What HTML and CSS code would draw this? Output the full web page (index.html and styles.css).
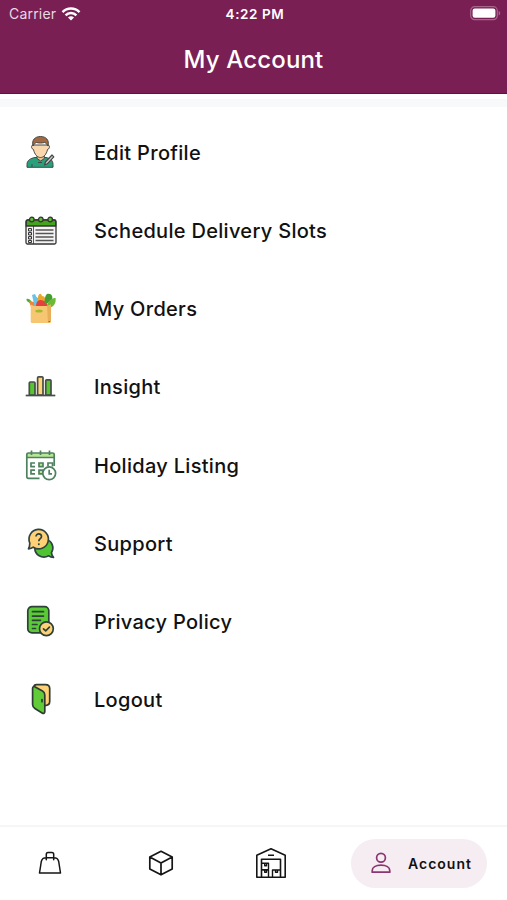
FILE: index.html
```html
<!DOCTYPE html>
<html lang="en">
<head>
    <meta charset="UTF-8">
    <meta name="viewport" content="width=device-width, initial-scale=1.0">
    <title>My Account</title>
    <link rel="stylesheet" href="styles.css">
</head>
<body>
    <header class="header">
        <div class="status-bar">
            <div class="carrier">
                <span>Carrier</span>
                <svg width="20" height="16" viewBox="0 0 20 16" fill="none" stroke="#fff" stroke-width="2.5">
                    <path d="M1.5 6.1a12 12 0 0 1 17 0M4.6 9.3a7.6 7.6 0 0 1 10.8 0"/>
                    <path d="M10 14.6 7 11.6a4.3 4.3 0 0 1 6 0z" fill="#fff" stroke="none"/>
                </svg>
            </div>
            <span class="time">4:22 PM</span>
            <div class="battery">
                <svg width="31" height="15" viewBox="0 0 31 15">
                    <rect x=".7" y=".7" width="26.6" height="13" rx="4" fill="none" stroke="#a5668a" stroke-width="1.2"/>
                    <rect x="2.6" y="2.6" width="22.8" height="9.2" rx="2.2" fill="#fff"/>
                    <path d="M28.7 5v4.4c2-.7 2-3.7 0-4.4z" fill="#a5668a"/>
                </svg>
            </div>
        </div>
        <h1 class="title">My Account</h1>
    </header>

    <main class="menu">
        <a class="menu-item">
            <svg class="icon" viewBox="0 0 36 36" stroke="#454747" stroke-width="1" stroke-linejoin="round">
                <path d="M5 32.300v-3c0-4 3.500-6 8-6.800h11c4 .8 7 2.800 7 6.800v3z" fill="#26a17b"/>
                <path d="M15 20v3.500l3.700 2.500 3.600-2.500V20z" fill="#efc096"/>
                <path d="M11 10c-2 0-2 4 .5 4.500 1 5 4 8 7 8s6-3 7-8c2.500-.5 2.500-4.500.5-4.500z" fill="#fbd7ae"/>
                <path d="M11 11C9.500 5 13 1.500 18.500 1.500S27.500 5 26 11c-1-2-2-3-3.500-3.500-3 .7-5.500.7-8 0C13 8 12 9 11 11z" fill="#a26a42"/>
                <path d="m22.500 30 1-3 6.500-7 1.800 1.800-6.500 7z" fill="#ccc" stroke-width="1.200"/>
                <path d="M10 29v3M16 27.500h4" fill="none"/>
            </svg>
            <span>Edit Profile</span>
        </a>
        <a class="menu-item">
            <svg class="icon" viewBox="0 0 36 36" stroke="#353535" stroke-width="1.300">
                <rect x="4" y="7" width="30" height="24" rx="1.500" fill="#f4f4f4"/>
                <path d="M4.300 13V8.500Q4.300 7 6 7h26q1.700 0 1.700 1.500V13z" fill="#43a51d"/>
                <path d="M11.500 13v18" stroke-width=".8"/>
                <path d="M13.500 17H31.500M13.500 20.500H31.500M13.500 24H31.500M13.500 27.500H31.500" stroke="#555" stroke-width="1.500"/>
                <path d="M6.500 15.500h3v2.500h-3zM6.500 19.500h3V22h-3zM6.500 23.500h3V26h-3zM6.500 27.500h3v2h-3z" fill="#ddd" stroke-width="1"/>
                <g fill="#5bbd31"><circle cx="9.800" cy="6.500" r="2.300"/><circle cx="18.800" cy="6.500" r="2.300"/><circle cx="28.200" cy="6.500" r="2.300"/></g>
            </svg>
            <span>Schedule Delivery Slots</span>
        </a>
        <a class="menu-item">
            <svg class="icon" viewBox="0 0 36 36">
                <path d="M4.500 8c3-1 5 2 7 6H9C8 11 4 11 4.500 8z" fill="#56a83c"/>
                <path d="m7 10 5 1 3 5H9z" fill="#f38432"/>
                <path d="m10 4 3-1 1.500 3 3 2v7h-5z" fill="#67c4e8"/>
                <path d="M16 6c1-4 3-4 4-1 3 0 4 3 3 6l-7 2z" fill="#e6a72d"/>
                <path d="M14 15c0-8 9-8 12 0z" fill="#e73d3f"/>
                <path d="M23 14c-1-5 0-9 2-11 5-1 6 3 5 6z" fill="#459d32"/>
                <path d="M25 14c2-5 5-7 8.500-7 1 5-2 9-6.500 10z" fill="#6dbb35"/>
                <path d="M8.700 13.500 12 15h13l4-1.500v17q0 1.500-1.500 1.500H10q-1.300 0-1.300-1.500z" fill="#f6c673"/>
                <path d="m25 15 4-1.500V31l-3 1z" fill="#e9ae58"/>
                <ellipse cx="17" cy="20" rx="3.700" ry="1.500" fill="#a5b92f"/>
                <path d="M26.500 30.500h1.500" stroke="#9a6a2e"/>
            </svg>
            <span>My Orders</span>
        </a>
        <a class="menu-item">
            <svg class="icon" viewBox="0 0 36 36" stroke="#474d49" stroke-width="1.700">
                <path d="M7.300 26V14q0-1 1-1H12q1 0 1 1v12zM23.700 26V11.800q0-1 1-1H28q1 0 1 1V26z" fill="#55c62d"/>
                <path d="M15.600 26V8.800q0-1 1-1H20q1 0 1 1V26z" fill="#ffd576"/>
                <path d="M3.700 26.500h29.600" stroke-width="1.700"/>
            </svg>
            <span>Insight</span>
        </a>
        <a class="menu-item">
            <svg class="icon" viewBox="0 0 36 36" fill="none" stroke="#4e8160" stroke-width="1.700">
                <path d="M4.500 5h28v4.500h-28z" fill="#b8e794" stroke="none"/>
                <path d="M17.500 30.300H6.500q-1.700 0-1.700-1.700V6.500Q4.800 5 6.500 5h24q1.700 0 1.700 1.500V18M4.800 9.500h27.400M9.500 2.500V7M18.500 2.500V7M27.500 2.500V7"/>
                <path d="M13 15h-4v3.700h4M13 22.200h-4v3.700h4M26 18.500V15h4.500v3.500"/>
                <path d="M17 15h4v3.700h-4zM17 22.200h4v3.700h-4z" fill="#b8e794"/>
                <circle cx="27.200" cy="25.300" r="6.400" fill="#fff"/>
                <path d="M27.200 21.800v4H30"/>
            </svg>
            <span>Holiday Listing</span>
        </a>
        <a class="menu-item">
            <svg class="icon" viewBox="0 0 36 36" stroke="#2e4241" stroke-width="1.700" stroke-linejoin="round">
                <path d="M31.500 31.300c-2 0-3.500-.5-4.700-1.500-7 3.500-14-1-14-7.800a9 9 0 1 1 16.600 4.700c.3 2 .8 3.300 2.100 4.600z" fill="#4fc331"/>
                <path d="M6.500 22.800c2 0 3.600-.6 4.800-1.600A9.700 9.700 0 1 0 7.800 17c0 2.600-.2 4.200-1.300 5.800z" fill="#ffd177"/>
                <path d="M14 10.500c0-3.500 5.500-3.300 5.500 0 0 2.200-2.700 2.300-2.700 4.800" fill="none"/>
                <path d="M16.800 17.300v1.800"/>
            </svg>
            <span>Support</span>
        </a>
        <a class="menu-item">
            <svg class="icon" viewBox="0 0 36 36" stroke="#2d4139" stroke-width="1.700" stroke-linecap="round" stroke-linejoin="round">
                <rect x="5.800" y="2.600" width="21" height="26.300" rx="4.200" fill="#5bcb35"/>
                <path d="M10.500 7.700h11M10.500 12.100h11M10.500 16.300h8M10.500 20.500h4.500M10.500 24.500h3"/>
                <circle cx="24.400" cy="24.800" r="6.900" fill="#ffd177"/>
                <path d="m21.500 24.800 2.200 2 3.700-3.600" fill="none"/>
            </svg>
            <span>Privacy Policy</span>
        </a>
        <a class="menu-item">
            <svg class="icon" viewBox="0 0 36 36" stroke="#2d3b33" stroke-width="1.700" stroke-linejoin="round">
                <path d="M12 5c0-1.500 1-2.400 2.500-2.400h9q4.200 0 4.200 4v13q0 4-5 4z" fill="#ffd177"/>
                <path d="M10.600 6.300c0-1.700 1.200-2.200 2.600-1.400l7.300 4.200q2.300 1.300 2.300 4v16.300c0 1.900-1.200 2.500-2.700 1.600l-7.200-4.400q-2.300-1.400-2.300-4z" fill="#62cc38"/>
                <path d="M20 17.500v2.200" stroke-linecap="round"/>
            </svg>
            <span>Logout</span>
        </a>
    </main>

    <nav class="tab-bar">
        <a class="tab">
            <svg width="24" height="24" viewBox="0 0 24 24" fill="none" stroke="#151515" stroke-width="1.500" stroke-linejoin="round" stroke-linecap="round">
                <path d="M8.300 6.800C5 6.800 4 7.500 3.300 10.500L1.500 22h21l-1.800-11.500C20 7.500 19 6.800 15.700 6.800zM8.300 8.800V3.300q0-1.800 1.800-1.800h3.800q1.800 0 1.800 1.800v5.500"/>
            </svg>
        </a>
        <a class="tab">
            <svg width="26" height="26" viewBox="0 0 26 26" fill="none" stroke="#151515" stroke-width="1.700" stroke-linejoin="round">
                <path d="M13 1.300 24.200 7v12L13 24.800 1.800 19V7zM1.800 7 13 13l11.200-6M13 13v11.800"/>
            </svg>
        </a>
        <a class="tab">
            <svg width="32" height="32" viewBox="0 0 32 32" fill="none" stroke="#151515" stroke-width="1.600" stroke-linejoin="round">
                <path d="M1.800 30.200V8.200L16 1.800l14.200 6.400v22zM6.500 30V12.300h19V30M13 8.300h6"/>
                <path d="M7 16.300h6.500v6.300H7M7.200 23h6.300v7M17.500 30v-7h8M9.700 16.500v2.200h1.800v-2.200M9.700 23v2.200h1.800V23M20.500 23v2.200h2V23" stroke-width="1.400"/>
            </svg>
        </a>
        <a class="tab active">
            <svg width="20" height="22" viewBox="0 0 20 22" fill="none" stroke="#8b3670" stroke-width="1.700" stroke-linejoin="round">
                <circle cx="10" cy="5.700" r="4.400"/>
                <path d="M1.200 20.200v-1.500c0-3.300 3.500-5.500 8.800-5.500s8.800 2.200 8.800 5.500v1.500z"/>
            </svg>
            <span>Account</span>
        </a>
    </nav>
</body>
</html>
```

FILE: styles.css
```css
* {
    box-sizing: border-box;
}
body {
    margin: 0;
    height: 900px;
    display: flex;
    flex-direction: column;
    font-family: Inter, Roboto, sans-serif;
    background-color: #fff;
    color: #111;
    overflow: hidden;
}
.header {
    height: 94px;
    background-color: #791f54;
    border-bottom: 1px solid #641044;
    color: #fff;
}
.status-bar {
    display: grid;
    grid-template-columns: 1fr auto 1fr;
    align-items: center;
    height: 27px;
    padding: 0 6px 0 9px;
    font-size: 14px;
}
.carrier {
    display: flex;
    align-items: center;
    gap: 5px;
    color: #ead8e3;
    letter-spacing: 0.2px;
}
.time {
    font-size: 13.5px;
    font-weight: 600;
    letter-spacing: 0.6px;
}
.battery {
    display: flex;
    justify-content: flex-end;
}
.title {
    margin: 0;
    font-size: 24px;
    font-weight: 500;
    line-height: 66px;
    letter-spacing: 0.15px;
    text-align: center;
}
.menu {
    flex: 1;
    margin-top: 5px;
    padding-top: 7px;
    border-top: 8px solid #f8f9fb;
}
.menu-item {
    display: flex;
    align-items: center;
    gap: 36px;
    height: 78.15px;
    padding-left: 22px;
    font-size: 20px;
    font-weight: 500;
    letter-spacing: 0.3px;
}
.icon {
    width: 36px;
    height: 36px;
}
.tab-bar {
    display: flex;
    align-items: center;
    gap: 14.5px;
    height: 75px;
    padding: 0 20px 1px 2px;
    border-top: 2px solid #f6f6f6;
}
.tab {
    display: flex;
    align-items: center;
    justify-content: center;
    width: 96px;
}
.active {
    justify-content: flex-start;
    gap: 17px;
    width: 136px;
    height: 49px;
    margin-left: auto;
    padding-left: 20px;
    border-radius: 25px;
    background-color: #f5edf2;
    font-size: 14px;
    font-weight: 600;
    letter-spacing: 1px;
}
```
